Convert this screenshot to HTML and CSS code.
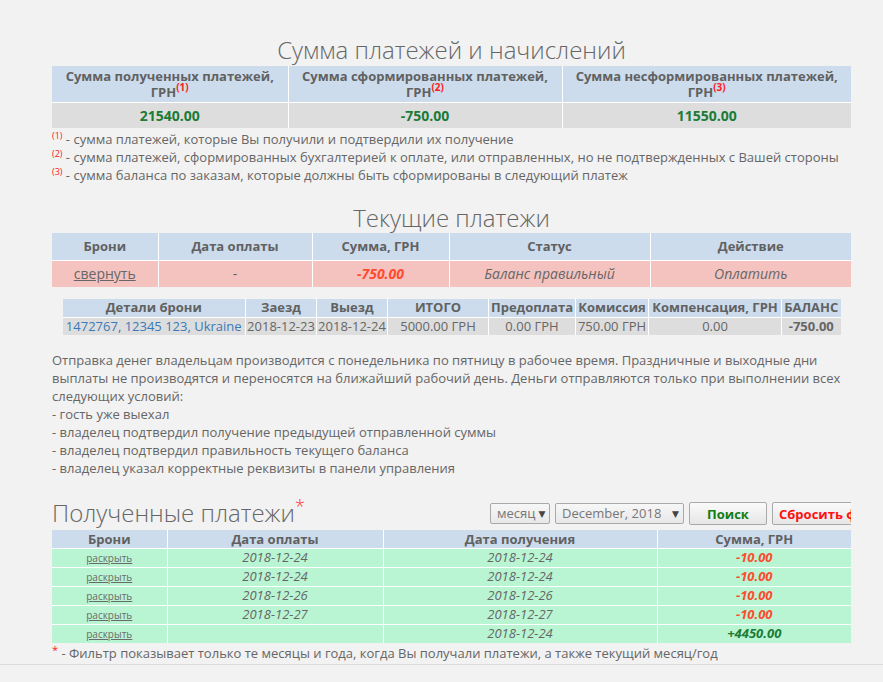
FILE: index.html
```html
<!DOCTYPE html>
<html>
<head>
<meta charset="utf-8">
<link rel="stylesheet" href="styles.css">
</head>
<body>
<div class="page">
  <h2 class="p-title">Сумма платежей и начислений</h2>
  <table class="p-table p-sum">
    <tr>
      <th>Сумма полученных платежей, ГРН<sup class="p-ref">(1)</sup></th>
      <th>Сумма сформированных платежей, ГРН<sup class="p-ref">(2)</sup></th>
      <th>Сумма несформированных платежей, ГРН<sup class="p-ref">(3)</sup></th>
    </tr>
    <tr class="p-gray">
      <td class="p-plus">21540.00</td>
      <td class="p-plus">-750.00</td>
      <td class="p-plus">11550.00</td>
    </tr>
  </table>
  <div class="p-notes">
    <div><sup class="p-note">(1)</sup> - сумма платежей, которые Вы получили и подтвердили их получение</div>
    <div><sup class="p-note">(2)</sup> - сумма платежей, сформированных бухгалтерией к оплате, или отправленных, но не подтвержденных с Вашей стороны</div>
    <div><sup class="p-note">(3)</sup> - сумма баланса по заказам, которые должны быть сформированы в следующий платеж</div>
  </div>

  <h2 class="p-title p-title-2">Текущие платежи</h2>
  <table class="p-table p-current">
    <tr>
      <th>Брони</th>
      <th>Дата оплаты</th>
      <th>Сумма, ГРН</th>
      <th>Статус</th>
      <th>Действие</th>
    </tr>
    <tr class="p-pink">
      <td><a class="p-toggle" href="#">свернуть</a></td>
      <td>-</td>
      <td class="p-minus">-750.00</td>
      <td class="p-it">Баланс правильный</td>
      <td class="p-it">Оплатить</td>
    </tr>
  </table>

  <table class="p-table p-details">
    <tr>
      <th>Детали брони</th>
      <th>Заезд</th>
      <th>Выезд</th>
      <th>ИТОГО</th>
      <th>Предоплата</th>
      <th>Комиссия</th>
      <th>Компенсация, ГРН</th>
      <th>БАЛАНС</th>
    </tr>
    <tr class="p-gray">
      <td><a class="p-link" href="#">1472767, 12345 123, Ukraine</a></td>
      <td>2018-12-23</td>
      <td>2018-12-24</td>
      <td>5000.00 ГРН</td>
      <td>0.00 ГРН</td>
      <td>750.00 ГРН</td>
      <td>0.00</td>
      <td class="p-bold">-750.00</td>
    </tr>
  </table>

  <div class="p-info">
    Отправка денег владельцам производится с понедельника по пятницу в рабочее время. Праздничные и выходные дни выплаты не производятся и переносятся на ближайший рабочий день. Деньги отправляются только при выполнении всех следующих условий:<br>
    - гость уже выехал<br>
    - владелец подтвердил получение предыдущей отправленной суммы<br>
    - владелец подтвердил правильность текущего баланса<br>
    - владелец указал корректные реквизиты в панели управления
  </div>

  <div class="p-head">
    <h2 class="p-title p-title-left">Полученные платежи<sup class="p-star">*</sup></h2>
    <div class="p-filter">
      <div class="p-select p-select-s">месяц <span class="p-arrow">▼</span></div>
      <div class="p-select p-select-l">December, 2018 <span class="p-arrow">▼</span></div>
      <button class="p-btn p-btn-go">Поиск</button>
      <button class="p-btn p-btn-reset">Сбросить фильтр</button>
    </div>
  </div>
  <table class="p-table p-received">
    <tr>
      <th>Брони</th>
      <th>Дата оплаты</th>
      <th>Дата получения</th>
      <th>Сумма, ГРН</th>
    </tr>
    <tr class="p-green">
      <td><a class="p-open" href="#">раскрыть</a></td>
      <td class="p-it">2018-12-24</td>
      <td class="p-it">2018-12-24</td>
      <td class="p-minus">-10.00</td>
    </tr>
    <tr class="p-green">
      <td><a class="p-open" href="#">раскрыть</a></td>
      <td class="p-it">2018-12-24</td>
      <td class="p-it">2018-12-24</td>
      <td class="p-minus">-10.00</td>
    </tr>
    <tr class="p-green">
      <td><a class="p-open" href="#">раскрыть</a></td>
      <td class="p-it">2018-12-26</td>
      <td class="p-it">2018-12-26</td>
      <td class="p-minus">-10.00</td>
    </tr>
    <tr class="p-green">
      <td><a class="p-open" href="#">раскрыть</a></td>
      <td class="p-it">2018-12-27</td>
      <td class="p-it">2018-12-27</td>
      <td class="p-minus">-10.00</td>
    </tr>
    <tr class="p-green">
      <td><a class="p-open" href="#">раскрыть</a></td>
      <td class="p-it"></td>
      <td class="p-it">2018-12-24</td>
      <td class="p-plus p-it">+4450.00</td>
    </tr>
  </table>
  <div class="p-foot"><sup class="p-star-s">*</sup> - Фильтр показывает только те месяцы и года, когда Вы получали платежи, а также текущий месяц/год</div>
</div>
<div class="p-bottom"></div>
</body>
</html>
```

FILE: styles.css
```css
* {box-sizing: border-box;}
html, body {margin: 0; padding: 0;}
body {background-color: #f2f2f2; font-family: "Open Sans", "DejaVu Sans", sans-serif; font-size: 13px; color: #666;}

.page {width: 799px; margin-left: 52px; padding-top: 35px;}

/* titles */
.p-title {margin: 0 0 1px 0; font-size: 24px; font-weight: 300; line-height: 30px; text-align: center; color: #666;}
.p-title-2 {margin-top: 19px; margin-bottom: 0;}
.p-title-left {text-align: left; margin: 0 0 2px 0; white-space: nowrap;}
.p-star {color: #ff2b2b; font-size: 18px; line-height: 0; vertical-align: 9px;}

/* tables */
.p-table {border-collapse: collapse; width: 100%;}
.p-table th, .p-table td {border: 1px solid #fff; text-align: center; padding: 0;}
.p-table th {background-color: #ccdcec; color: #616161; font-weight: 700;}
.p-table tr:first-child th {border-top: 0;}
.p-table tr th:first-child, .p-table tr td:first-child {border-left: 0;}
.p-table tr th:last-child, .p-table tr td:last-child {border-right: 0;}
.p-table tr:last-child td {border-bottom: 0;}

.p-gray td {background-color: #dddddd;}
.p-pink td {background-color: #f4c3bf;}
.p-green td {background-color: #b9f5d3;}

.p-plus {color: #1b7b37; font-weight: 700;}
.p-minus {color: #ff4b2e; font-weight: 700; font-style: italic;}
.p-it {font-style: italic;}
.p-bold {font-weight: 700;}

.p-sum th {height: 36px; line-height: 16px; padding: 1px 8px;}
.p-sum td {height: 26px; font-size: 14px;}
.p-sum th:nth-child(1) {width: 236px;}
.p-sum th:nth-child(2) {width: 274px;}

.p-ref {color: #ff1a1a; font-size: 10px; line-height: 0; vertical-align: 6px;}

.p-notes {margin-top: 2px; line-height: 18px;}
.p-note {color: #ff1a1a; font-size: 9px; line-height: 0; vertical-align: 5px;}

.p-current th {height: 27px;}
.p-current td {height: 27px; font-size: 14px;}
.p-current th:nth-child(1) {width: 106px;}
.p-current th:nth-child(2) {width: 154px;}
.p-current th:nth-child(3) {width: 137px;}
.p-current th:nth-child(4) {width: 201px;}
.p-toggle {color: #666; text-decoration: underline;}

.p-details {width: 778px; margin: 12px auto 0 auto;}
.p-details th, .p-details td {height: 18px; line-height: 17px; white-space: nowrap; padding: 0 1px;}
.p-details th:nth-child(1) {width: 183px;}
.p-details th:nth-child(2) {width: 71px;}
.p-details th:nth-child(3) {width: 71px;}
.p-details th:nth-child(4) {width: 101px;}
.p-details th:nth-child(5) {width: 87px;}
.p-details th:nth-child(6) {width: 73px;}
.p-details th:nth-child(7) {width: 133px;}
.p-link {color: #3a7ab8; text-decoration: none;}

.p-info {margin-top: 16px; line-height: 18px;}

/* received payments */
.p-head {display: flex; justify-content: space-between; align-items: flex-end; margin-top: 21px; height: 32px;}
.p-filter {display: flex; gap: 5px; padding: 1px 0 5px 0; flex-shrink: 0; width: 361px; overflow: hidden;}
.p-select {flex-shrink: 0; height: 21px; line-height: 19px; margin-top: 1px; border: 1px solid #a9a9a9; border-radius: 2px; background: linear-gradient(#f7f7f7, #e8e8e8); color: #777; font-size: 13px; padding: 0 4px 0 6px; display: flex; justify-content: space-between; white-space: nowrap;}
.p-select-s {width: 60px;}
.p-select-l {width: 129px;}
.p-arrow {font-size: 9px; color: #444; margin-left: 3px;}
.p-btn {flex-shrink: 0; height: 23px; margin: 0; padding: 0 12px; border: 1px solid #a9a9a9; border-radius: 2px; background: linear-gradient(#fafafa, #e6e6e6); font-family: "Open Sans", sans-serif; font-size: 13px; font-weight: 700; white-space: nowrap;}
.p-btn-go {width: 78px; color: #0f7d18;}
.p-btn-reset {color: #ff1111; padding: 0 6px;}

.p-received th {height: 18px; line-height: 16px;}
.p-received td {height: 19px; line-height: 17px;}
.p-received th:nth-child(1) {width: 115px;}
.p-received th:nth-child(2) {width: 216px;}
.p-received th:nth-child(3) {width: 274px;}
.p-open {color: #6a6a6a; font-size: 10px; text-decoration: underline;}

.p-foot {margin-top: 1px; line-height: 18px;}
.p-star-s {color: #ff1a1a; font-size: 11px; line-height: 0; vertical-align: 4px;}

.p-bottom {margin-top: 2px; border-top: 1px solid #dcdcdc; height: 20px;}
```
